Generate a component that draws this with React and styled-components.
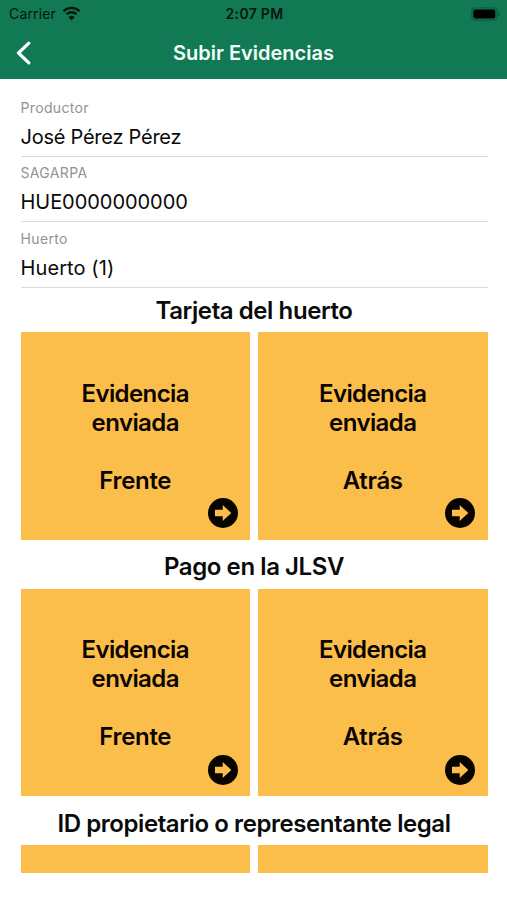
import React from "react";
import styled, { createGlobalStyle } from "styled-components";

const GlobalStyle = createGlobalStyle`
  * {
    box-sizing: border-box;
  }

  body {
    margin: 0;
    background-color: #fff;
    color: #0a0a0a;
    font-family: Inter, "Liberation Sans", sans-serif;
  }
`;

const Screen = styled.div`
  display: flex;
  flex-direction: column;
  height: 900px;
`;

const Header = styled.header`
  flex: none;
  height: 79px;
  background-color: #117953;
`;

const StatusBar = styled.div`
  display: grid;
  grid-template-columns: 1fr auto 1fr;
  align-items: center;
  height: 27px;
  padding: 0 7px 0 9px;
  color: #04170f;
  font-size: 14px;
  line-height: 18px;
`;

const Carrier = styled.div`
  display: flex;
  align-items: center;
  gap: 6px;
  letter-spacing: 0.15px;
`;

const Clock = styled.div`
  font-size: 14px;
  font-weight: 600;
  letter-spacing: 0.3px;
`;

const Battery = styled.svg`
  justify-self: end;
`;

const NavBar = styled.div`
  display: grid;
  grid-template-columns: 60px 1fr 60px;
  align-items: center;
  height: 51px;
`;

const BackButton = styled.button`
  display: flex;
  align-items: center;
  height: 100%;
  padding: 0 0 0 15px;
  border: none;
  background: none;
`;

const NavTitle = styled.h1`
  margin: 0;
  color: #f4fffa;
  font-size: 20px;
  font-weight: 600;
  line-height: 24px;
  text-align: center;
`;

const Content = styled.main`
  padding: 12px 19.5px 0 20.5px;
`;

const Field = styled.div`
  height: 65.6px;
  padding-top: 7.500px;
  border-bottom: 1.5px solid #dadada;
`;

const Label = styled.div`
  color: #929292;
  font-size: 14px;
  line-height: 18px;
  letter-spacing: 0.35px;
`;

const Value = styled.div`
  margin-top: 8px;
  font-size: 20px;
  line-height: 24px;
  letter-spacing: ${(props) => props.$spacing};
`;

const SectionTitle = styled.h2`
  margin: 0;
  height: ${(props) => (props.$first ? "44.4px" : "49px")};
  padding-top: ${(props) => (props.$first ? "8px" : "12.4px")};
  font-size: 24px;
  font-weight: 600;
  line-height: 30px;
  letter-spacing: -0.42px;
  text-align: center;
  white-space: nowrap;
`;

const Cards = styled.div`
  display: grid;
  grid-template-columns: 1fr 1fr;
  gap: 8px;
`;

const Card = styled.button`
  display: flex;
  flex-direction: column;
  height: ${(props) => (props.$collapsed ? "28px" : "207.5px")};
  padding: ${(props) => (props.$collapsed ? "0" : "46.5px 12.5px 11.500px")};
  border: none;
  background-color: #fcbe4a;
  color: #0a0500;
  font: inherit;
  text-align: center;
`;

const CardText = styled.span`
  align-self: center;
  width: 130px;
  font-size: 24px;
  font-weight: 600;
  line-height: 29px;
  letter-spacing: -0.58px;
`;

const CardSide = styled(CardText)`
  margin-top: 29px;
  letter-spacing: -0.35px;
`;

const CardArrow = styled.svg`
  align-self: flex-end;
  margin-top: auto;
`;

const fields = [
  { label: "Productor", value: "José Pérez Pérez", spacing: "-0.25px" },
  { label: "SAGARPA", value: "HUE0000000000", spacing: "-0.05px" },
  { label: "Huerto", value: "Huerto (1)", spacing: "0.1px" },
];

const sections = [
  { title: "Tarjeta del huerto", sides: ["Frente", "Atrás"] },
  { title: "Pago en la JLSV", sides: ["Frente", "Atrás"] },
  { title: "ID propietario o representante legal", sides: [] },
];

function WifiIcon() {
  return (
    <svg width="19" height="15" viewBox="0 0 19 15" fill="none">
      <path
        d="M1.5 5.2a11.3 11.3 0 0 1 16 0M4.5 8.3a7.1 7.1 0 0 1 10 0"
        stroke="#04170f"
        strokeWidth="2.3"
      />
      <path d="M9.5 14.2 6.5 11.2a4.3 4.3 0 0 1 6 0z" fill="#04170f" />
    </svg>
  );
}

function BatteryIcon() {
  return (
    <Battery width="29" height="14" viewBox="0 0 29 14">
      <rect
        x="0.8"
        y="0.8"
        width="25"
        height="12.4"
        rx="3.6"
        fill="none"
        stroke="#0c5c3f"
        strokeWidth="1.2"
      />
      <rect x="2.3" y="2.4" width="22" height="9.2" rx="2" fill="#000" />
      <path d="M27 5v4c1.1-.4 1.7-1.1 1.7-2S28.1 5.4 27 5z" fill="#0c5c3f" />
    </Battery>
  );
}

function BackIcon() {
  return (
    <svg width="18" height="24" viewBox="0 0 18 24" fill="none">
      <path
        d="M13.8 2.2 3.5 12l10.3 9.8"
        stroke="#fff"
        strokeWidth="3.2"
        strokeLinecap="round"
        strokeLinejoin="round"
      />
    </svg>
  );
}

function ArrowIcon() {
  return (
    <CardArrow width="30" height="30" viewBox="0 0 30 30">
      <circle cx="15" cy="15" r="15" fill="#080400" />
      <path
        d="M7 11.8h7.7V7.1l8.6 7.9-8.6 7.9v-4.7H7z"
        fill="#fcbe4a"
      />
    </CardArrow>
  );
}

function EvidenceCard({ side }) {
  return (
    <Card type="button">
      <CardText>Evidencia enviada</CardText>
      <CardSide>{side}</CardSide>
      <ArrowIcon />
    </Card>
  );
}

function App() {
  return (
    <Screen>
      <GlobalStyle />
      <Header>
        <StatusBar>
          <Carrier>
            Carrier
            <WifiIcon />
          </Carrier>
          <Clock>2:07 PM</Clock>
          <BatteryIcon />
        </StatusBar>
        <NavBar>
          <BackButton type="button" aria-label="Volver">
            <BackIcon />
          </BackButton>
          <NavTitle>Subir Evidencias</NavTitle>
        </NavBar>
      </Header>
      <Content>
        {fields.map(({ label, value, spacing }) => (
          <Field key={label}>
            <Label>{label}</Label>
            <Value $spacing={spacing}>{value}</Value>
          </Field>
        ))}
        {sections.map(({ title, sides }, index) => (
          <section key={title}>
            <SectionTitle $first={index === 0}>{title}</SectionTitle>
            <Cards>
              {sides.length > 0 ? (
                sides.map((side) => <EvidenceCard key={side} side={side} />)
              ) : (
                <>
                  <Card type="button" $collapsed />
                  <Card type="button" $collapsed />
                </>
              )}
            </Cards>
          </section>
        ))}
      </Content>
    </Screen>
  );
}

export default App;
